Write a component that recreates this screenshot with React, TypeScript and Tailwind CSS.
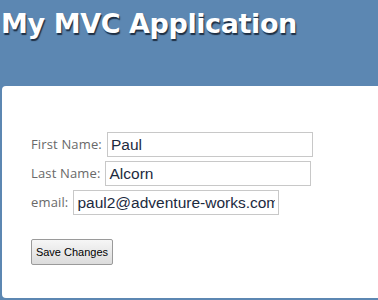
export default function App() {
  const rows = [
    { label: "First Name:", value: "Paul" },
    { label: "Last Name:", value: "Alcorn" },
    { label: "email:", value: "paul2@adventure-works.com" },
  ]

  return (
    <div className="w-[378px] h-[300px] bg-[#5c87b2] overflow-hidden flex flex-col">
      <header className="h-[86px] shrink-0 pl-[1px] pt-[6px]">
        <h1 className="text-white font-bold text-[27px] leading-[36px] tracking-[-0.4px] [font-family:'DejaVu_Sans',sans-serif] [text-shadow:1px_2px_1px_#1e2f44]">
          My MVC Application
        </h1>
      </header>

      <main className="ml-[2px] h-[212px] bg-white rounded-l-[4px] pl-[29px] pt-[46px]">
        <form className="flex flex-col gap-[4px]" onSubmit={e => e.preventDefault()}>
          {rows.map(row => (
            <div key={row.label} className="flex items-center gap-[5px] h-[25px]">
              <label className="text-[#696969] text-[13px] tracking-[0.15px] [font-family:'Open_Sans',sans-serif]">
                {row.label}
              </label>
              <input
                defaultValue={row.value}
                className="w-[206px] h-[25px] border border-[#c8c8c8] px-[3px] text-[15.5px] text-[#1c2a3e] [font-family:'Liberation_Sans',Arial,sans-serif] outline-none"
              />
            </div>
          ))}
          <div className="mt-[19px]">
            <button
              type="submit"
              className="w-[82px] h-[26px] border border-[#9a9a9a] rounded-[2px] bg-gradient-to-b from-[#f6f6f6] to-[#dcdcdc] text-[11px] text-black [font-family:'Liberation_Sans',Arial,sans-serif]"
            >
              Save Changes
            </button>
          </div>
        </form>
      </main>
    </div>
  )
}
